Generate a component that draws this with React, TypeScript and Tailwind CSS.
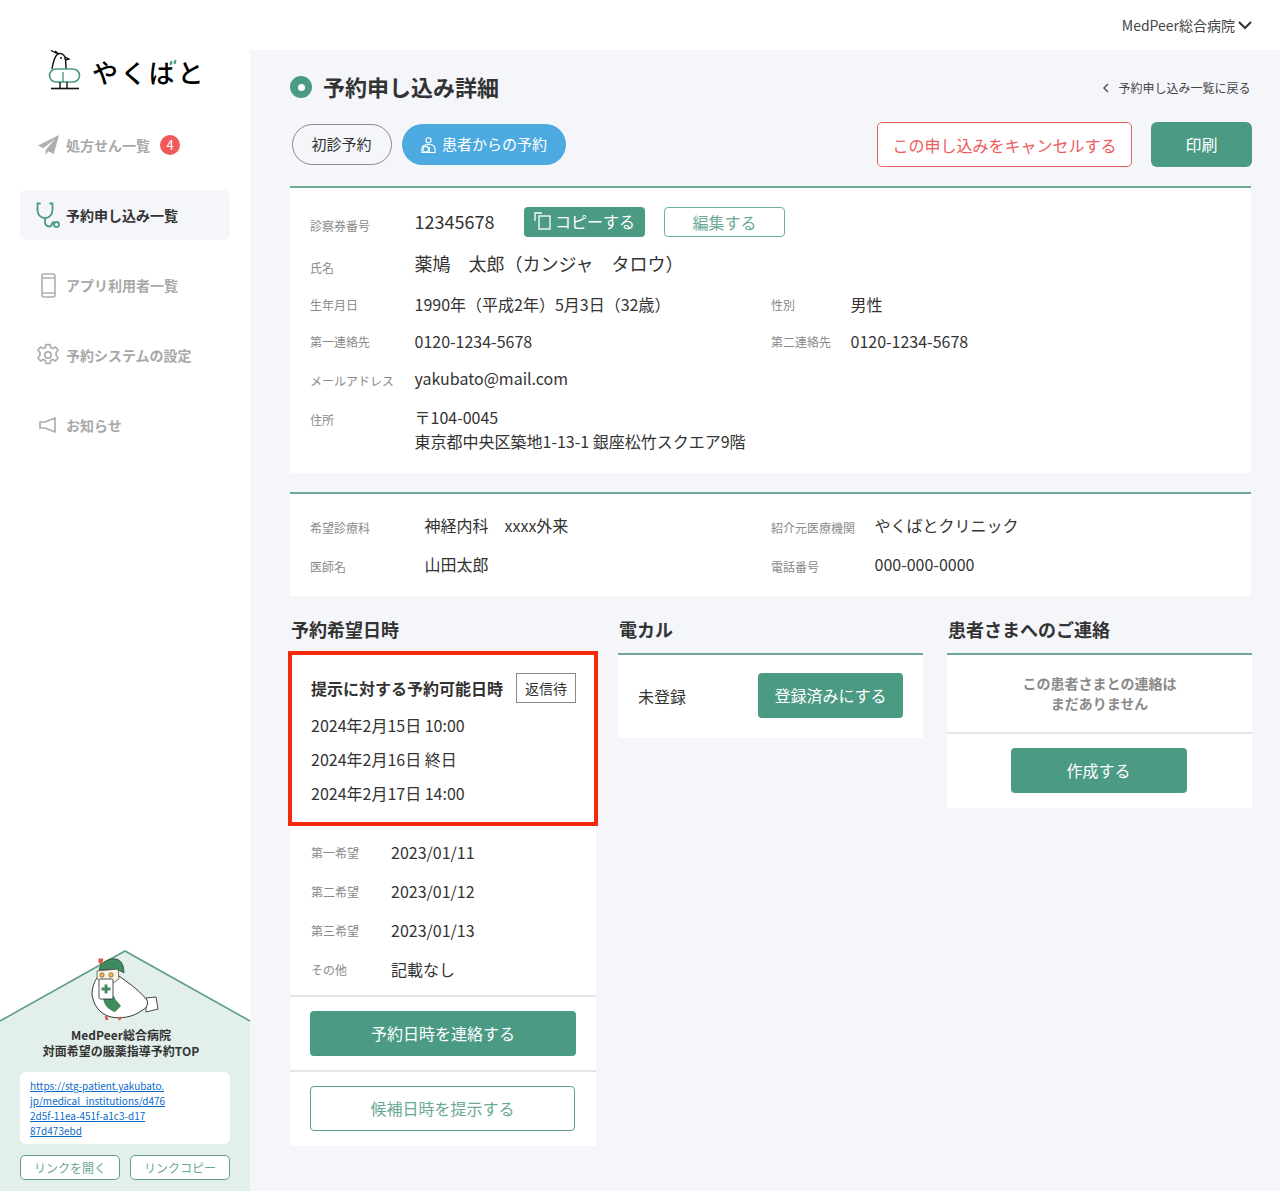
import React from "react";

const font = { fontFamily: '"Noto Sans CJK JP", "Noto Sans", sans-serif' };

function Logo() {
  return (
    <div className="flex items-start gap-[10px] h-[50px] pl-[48px]">
      <svg width="34" height="40" viewBox="0 0 34 40" fill="none">
        <path d="M4 19 C5 13 6 9 8 6 C10 2 16 3 17 8 C18 11 18 15 18 19" stroke="#111" strokeWidth="1.4" />
        <path d="M3 0.500 L10 4 M7 1 L11 4 M17 7 L21 9 L17 10" stroke="#111" strokeWidth="1.300" />
        <circle cx="13" cy="8" r="1" fill="#111" />
        <rect x="1.500" y="19" width="30" height="13" rx="6.500" stroke="#4b9b84" strokeWidth="1.700" fill="#fff" />
        <path d="M15 22 V32" stroke="#4b9b84" strokeWidth="1.400" />
        <path d="M12 32 V38 M19 32 V38" stroke="#111" strokeWidth="1.400" />
        <path d="M3 38.500 H31" stroke="#111" strokeWidth="1.600" />
      </svg>
      <span className="relative text-[26px] leading-[40px] font-medium text-black tracking-[2.500px] mt-[2px]">
        やくばと
        <svg width="10" height="9" viewBox="0 0 10 9" className="absolute left-[76px] top-[6px]">
          <rect width="10" height="9" fill="#fff" />
          <ellipse cx="3" cy="5" rx="1.300" ry="2.400" fill="#4b9b84" transform="rotate(15 3 5)" />
          <ellipse cx="7" cy="4" rx="1.300" ry="2.400" fill="#4b9b84" transform="rotate(15 7 4)" />
        </svg>
      </span>
    </div>
  );
}

function PlaneIcon() {
  return (
    <svg width="21" height="21" viewBox="1 1 20 20" fill="#aeaeae">
      <path d="M21 1 L1 11 L6 13.5 L17 5 L8.5 15 L8 20 L11 16.5 L16 19 Z" />
    </svg>
  );
}
function StethIcon() {
  return (
    <svg width="24" height="26" viewBox="0 0 24 26" fill="none" stroke="#4b9b84" strokeWidth="1.800" strokeLinecap="round">
      <path d="M4 1.500 H1.500 V8 C1.500 13 5 16 9 16 C13 16 16.500 13 16.500 8 V1.500 H14" />
      <path d="M9 16 V20 C9 25 15 26 16 22 C16.500 20 17 20 18 20.500" />
      <circle cx="20.500" cy="22.500" r="2.500" />
    </svg>
  );
}
function PhoneIcon() {
  return (
    <svg width="15" height="25" viewBox="0 0 15 25" fill="none" stroke="#aeaeae" strokeWidth="1.600">
      <rect x="1" y="1" width="13" height="23" rx="2" />
      <path d="M1 5 H14 M1 20 H14" />
    </svg>
  );
}
function GearIcon() {
  return (
    <svg width="24" height="24" viewBox="0 0 24 24" fill="none" stroke="#aeaeae" strokeWidth="1.700" strokeLinejoin="round">
      <path d="M10 1.500h4l.6 3 2.200 1 2.700-1.500 2.600 3.300-2 2.300v2.800l2 2.300-2.600 3.300-2.700-1.500-2.200 1-.6 3h-4l-.6-3-2.200-1-2.700 1.500-2.600-3.300 2-2.300V9.600l-2-2.300 2.600-3.300 2.700 1.500 2.200-1z" />
      <circle cx="12" cy="12" r="3.200" />
    </svg>
  );
}
function HornIcon() {
  return (
    <svg width="18" height="16" viewBox="0 0 18 16" fill="none" stroke="#aeaeae" strokeWidth="1.700" strokeLinejoin="round">
      <path d="M1 5 H6 L16 1 V15 L6 11 H1 Z" />
    </svg>
  );
}

function NavItem({ icon, label, active, badge }: { icon: React.ReactNode; label: string; active?: boolean; badge?: string }) {
  return (
    <div className={`flex items-center h-[50px] w-[210px] mx-[20px] rounded-[6px] pl-[16px] ${active ? "bg-[#f4f6fa] text-[#333]" : "text-[#a8a8a8]"}`}>
      <div className="w-[24px] flex justify-center shrink-0">{icon}</div>
      <span className="text-[14px] font-bold ml-[6px]">{label}</span>
      {badge && (
        <span className="ml-[10px] w-[20px] h-[20px] rounded-full bg-[#ee5a5a] text-white text-[13px] flex items-center justify-center">
          {badge}
        </span>
      )}
    </div>
  );
}

function Mascot() {
  return (
    <svg width="70" height="70" viewBox="0 0 70 70" className="absolute left-[91px] top-[6px]">
      <path d="M55 42 L65 41 L67 53 L55 56 Z" fill="#fff" stroke="#222" strokeWidth="0.800" />
      <path d="M1 38 C1 30 5 22 8 20 L28 20 C36 26 46 32 56 44 C58 50 54 53 50 55 C42 61 30 63 20 61 C8 58 2 48 1 38Z" fill="#fff" stroke="#222" strokeWidth="0.900" />
      <path d="M8 14 C9 6 20 0 28 4 C32 7 33 12 33 17 C28 13 18 13 8 14Z" fill="#3f8a5f" stroke="#222" strokeWidth="0.600" />
      <path d="M8 7 C6 3 9 1 10 3 C11 1 14 3 11 7 L10 9 Z" fill="#e2574c" />
      <path d="M6 15 L27 13 L28 23 L22 27 L10 27 L6 22 Z" fill="#fbf3e4" stroke="#222" strokeWidth="0.600" />
      <circle cx="11" cy="19" r="2.200" fill="#f3c44e" stroke="#222" strokeWidth="0.500" />
      <circle cx="20" cy="19" r="2.200" fill="#f3c44e" stroke="#222" strokeWidth="0.500" />
      <path d="M12 42 C13 50 18 54 24 56 L30 50 C27 46 24 44 23 40Z" fill="#3f8a5f" />
      <rect x="8" y="23" width="14" height="20" rx="1.500" fill="#fff" stroke="#222" strokeWidth="0.800" />
      <path d="M15 28.500 V37.500 M10.500 33 H19.500" stroke="#3f8a5f" strokeWidth="2.800" />
      <path d="M15 60 L16 64 M28 61 L29 64" stroke="#d9615a" strokeWidth="2.800" />
    </svg>
  );
}

function Sidebar() {
  return (
    <aside className="w-[250px] shrink-0 bg-white flex flex-col justify-between pt-[50px]">
      <div>
        <Logo />
        <nav className="flex flex-col gap-[20px] mt-[20px]">
          <NavItem icon={<PlaneIcon />} label="処方せん一覧" badge="4" />
          <NavItem active icon={<StethIcon />} label="予約申し込み一覧" />
          <NavItem icon={<PhoneIcon />} label="アプリ利用者一覧" />
          <NavItem icon={<GearIcon />} label="予約システムの設定" />
          <NavItem icon={<HornIcon />} label="お知らせ" />
        </nav>
      </div>
      <div className="relative h-[241px] pt-[77px]">
        <svg width="250" height="241" viewBox="0 0 250 241" className="absolute left-0 top-0">
          <path d="M0 71 L125 1 L250 71 V241 H0 Z" fill="#e3efeb" />
          <path d="M0 71 L125 1 L250 71" fill="none" stroke="#5f9d88" strokeWidth="1.600" />
        </svg>
        <Mascot />
        <div className="relative">
          <p className="text-center text-[12px] leading-[16px] font-bold text-[#333] pr-[8px]">
            MedPeer総合病院
            <br />
            対面希望の服薬指導予約TOP
          </p>
          <div className="mx-[20px] mt-[13px] h-[72px] bg-white rounded-[6px] px-[10px] py-[6px] text-[10px] leading-[15px] text-[#0b6bcb] underline break-all">
            https://stg-patient.yakubato.
            <br />
            jp/medical_institutions/d476
            <br />
            2d5f-11ea-451f-a1c3-d17
            <br />
            87d473ebd
          </div>
          <div className="flex gap-[10px] mx-[20px] mt-[11px]">
            <button className="w-[100px] h-[25px] bg-white rounded-[5px] border border-[#5f9d88] text-[12px] text-[#6aa995]">リンクを開く</button>
            <button className="w-[100px] h-[25px] bg-white rounded-[5px] border border-[#5f9d88] text-[12px] text-[#6aa995]">リンクコピー</button>
          </div>
        </div>
      </div>
    </aside>
  );
}

function Label({ w, pt, children }: { w: string; pt: string; children: React.ReactNode }) {
  return <div className={`${w} ${pt} text-[12px] leading-[16px] text-[#8a8a8a] shrink-0`}>{children}</div>;
}

function Row({ className, children }: { className?: string; children: React.ReactNode }) {
  return <div className={`flex items-center text-[#333] ${className ?? ""}`}>{children}</div>;
}

function CopyIcon() {
  return (
    <svg width="18" height="18" viewBox="0 0 18 18" fill="none" stroke="#fff" strokeWidth="1.300">
      <path d="M1 9 V1 H8" />
      <rect x="5" y="4" width="11" height="13" />
    </svg>
  );
}

function PatientIcon() {
  return (
    <svg width="15" height="18" viewBox="0 0 16 18" fill="none" stroke="#fff" strokeWidth="1.200">
      <circle cx="8" cy="4" r="2.800" />
      <path d="M1 17 V13 C1 10 4 8.500 8 8.500 C12 8.500 15 10 15 13 V17 Z" />
      <circle cx="5" cy="13.500" r="3" />
      <path d="M9 11 V17" />
    </svg>
  );
}

function SectionTitle({ children }: { children: React.ReactNode }) {
  return <h2 className="text-[18px] leading-[26px] font-bold text-[#333] h-[26px] pl-[1px]">{children}</h2>;
}

function PrefRow({ label, value }: { label: string; value: string }) {
  return (
    <div className="flex items-center h-[39px] pl-[21px] text-[#333]">
      <div className="w-[80px] text-[12px] text-[#8a8a8a] pt-[2px]">{label}</div>
      <div className="text-[16px]">{value}</div>
    </div>
  );
}

export default function App() {
  return (
    <div style={font} className="w-[1280px] h-[1191px] bg-white flex flex-col overflow-hidden">
      <header className="h-[50px] shrink-0 flex items-center justify-end pr-[28px] gap-[3px] text-[14px] text-[#444] bg-white">
        <span>MedPeer総合病院</span>
        <svg width="14" height="10" viewBox="0 0 14 10" fill="none" stroke="#333" strokeWidth="2"><path d="M1 2 L7 8 L13 2" /></svg>
      </header>
      <div className="flex flex-1 min-h-0">
        <div className="-mt-[50px] flex">
          <Sidebar />
        </div>
        <main className="flex-1 bg-[#f4f6fa] pl-[40px] pr-[29px] pt-[19px]">
          <div className="flex items-center justify-between h-[36px]">
            <div className="flex items-center">
              <span className="w-[22px] h-[22px] rounded-full bg-[#4b9b84] flex items-center justify-center">
                <span className="w-[7px] h-[7px] rounded-full bg-white" />
              </span>
              <h1 className="ml-[11px] text-[22px] font-bold text-[#333] pb-[2px]">予約申し込み詳細</h1>
            </div>
            <div className="flex items-center text-[12px] text-[#444] pt-[2px] pr-[0.500px]">
              <svg width="8" height="10" viewBox="0 0 8 10" fill="none" stroke="#555" strokeWidth="1.500" className="mr-[8px]"><path d="M6 1 L2 5 L6 9" /></svg>
              予約申し込み一覧に戻る
            </div>
          </div>

          <div className="flex items-center justify-between mt-[17px] h-[45px]">
            <div className="flex items-center gap-[10px] pl-[2px]">
              <span className="w-[100px] h-[41px] pr-[1px] rounded-full border border-[#8a8a8a] flex items-center justify-center text-[15px] text-[#333]">初診予約</span>
              <span className="w-[164px] h-[41px] rounded-full bg-[#4daae0] flex items-center justify-center gap-[6px] text-[15px] text-white">
                <PatientIcon />
                患者からの予約
              </span>
            </div>
            <div className="flex items-center gap-[19px] -mr-[1px]">
              <button className="w-[255px] h-[45px] bg-white rounded-[5px] border border-[#e8605a] text-[16px] text-[#ee5a5a]">この申し込みをキャンセルする</button>
              <button className="w-[101px] h-[45px] pb-[2px] rounded-[6px] bg-[#4b9b84] text-[16px] text-white">印刷</button>
            </div>
          </div>

          <section className="mt-[19px] h-[287px] bg-white border-t-2 border-[#6fa896] pl-[20px] pt-[19px]">
            <Row className="h-[30px]">
              <Label w="w-[104.500px]" pt="pt-[8px]">診察券番号</Label>
              <span className="text-[18px] pb-[2px]">12345678</span>
              <span className="ml-[29.500px] w-[121px] h-[30px] pb-[2px] rounded-[4px] bg-[#4b9b84] text-white text-[16px] flex items-center justify-center gap-[3px]">
                <CopyIcon />
                コピーする
              </span>
              <span className="ml-[19px] w-[121px] h-[30px] rounded-[4px] border border-[#6fb09b] text-[#6aa995] text-[16px] flex items-center justify-center">編集する</span>
            </Row>
            <Row className="h-[30px] mt-[11px]">
              <Label w="w-[104.500px]" pt="pt-[10px]">氏名</Label>
              <span className="text-[18px]">薬鳩　太郎（カンジャ　タロウ）</span>
            </Row>
            <Row className="h-[24px] mt-[14px]">
              <Label w="w-[104.500px]" pt="pt-[1px]">生年月日</Label>
              <span className="text-[16px] w-[356.500px]">1990年（平成2年）5月3日（32歳）</span>
              <Label w="w-[79.500px]" pt="pt-[1px]">性別</Label>
              <span className="text-[16px]">男性</span>
            </Row>
            <Row className="h-[24px] mt-[13px]">
              <Label w="w-[104.500px]" pt="pt-[1px]">第一連絡先</Label>
              <span className="text-[16px] w-[356.500px]">0120-1234-5678</span>
              <Label w="w-[79.500px]" pt="pt-[1px]">第二連絡先</Label>
              <span className="text-[16px]">0120-1234-5678</span>
            </Row>
            <Row className="h-[24px] mt-[13px]">
              <Label w="w-[104.500px]" pt="pt-[5px]">メールアドレス</Label>
              <span className="text-[16px]">yakubato@mail.com</span>
            </Row>
            <div className="flex text-[#333] mt-[15px]">
              <Label w="w-[104.500px]" pt="pt-[7px]">住所</Label>
              <div className="text-[16px] leading-[24px]">
                〒104-0045
                <br />
                東京都中央区築地1-13-1 銀座松竹スクエア9階
              </div>
            </div>
          </section>

          <section className="mt-[19px] h-[104px] bg-white border-t-2 border-[#6fa896] pl-[20px] pt-[19px]">
            <Row className="h-[24px]">
              <Label w="w-[114.500px]" pt="pt-[5px]">希望診療科</Label>
              <span className="text-[16px] w-[346.500px]">神経内科　xxxx外来</span>
              <Label w="w-[103.500px]" pt="pt-[5px]">紹介元医療機関</Label>
              <span className="text-[16px]">やくばとクリニック</span>
            </Row>
            <Row className="h-[24px] mt-[15px]">
              <Label w="w-[114.500px]" pt="pt-[5px]">医師名</Label>
              <span className="text-[16px] w-[346.500px]">山田太郎</span>
              <Label w="w-[103.500px]" pt="pt-[5px]">電話番号</Label>
              <span className="text-[16px]">000-000-0000</span>
            </Row>
          </section>

          <div className="flex mt-[20px] -mr-[1px] items-start">
            <div className="w-[306px]">
              <SectionTitle>予約希望日時</SectionTitle>
              <div className="bg-white mt-[9px]">
                <div className="-mx-[2px] h-[175px] border-[4px] border-[#f52a0a] bg-white pl-[19px] pt-[18px] text-[#333]">
                  <div className="flex items-center h-[30px]">
                    <span className="text-[16px] font-bold">提示に対する予約可能日時</span>
                    <span className="ml-[13px] w-[60px] h-[30px] border border-[#8a8a8a] text-[14px] flex items-center justify-center">返信待</span>
                  </div>
                  <div className="mt-[5px] text-[16px] leading-[34px]">
                    <div>2024年2月15日 10:00</div>
                    <div>2024年2月16日 終日</div>
                    <div>2024年2月17日 14:00</div>
                  </div>
                </div>
                <div className="pt-[6px] pb-[7px]">
                  <PrefRow label="第一希望" value="2023/01/11" />
                  <PrefRow label="第二希望" value="2023/01/12" />
                  <PrefRow label="第三希望" value="2023/01/13" />
                  <PrefRow label="その他" value="記載なし" />
                </div>
                <div className="border-t-2 border-[#e5e5e5] px-[20px] pt-[14px] pb-[14px]">
                  <button className="w-[266px] h-[45px] pb-[2px] bg-[#4b9b84] rounded-[4px] text-white text-[16px]">予約日時を連絡する</button>
                </div>
                <div className="border-t-2 border-[#e5e5e5] px-[20px] pt-[14px] pb-[15px]">
                  <button className="w-[265px] h-[45px] pb-[2px] bg-white border border-[#5f9d88] rounded-[4px] text-[#6aa995] text-[16px]">候補日時を提示する</button>
                </div>
              </div>
            </div>

            <div className="w-[305px] ml-[22px]">
              <SectionTitle>電カル</SectionTitle>
              <div className="mt-[11px] bg-white border-t-2 border-[#6fa896] h-[85px] pb-[2px] flex items-center pl-[20px] text-[#333]">
                <span className="text-[16px] w-[120px]">未登録</span>
                <button className="w-[145px] h-[45px] pb-[2px] bg-[#4b9b84] rounded-[4px] text-white text-[16px]">登録済みにする</button>
              </div>
            </div>

            <div className="w-[305px] ml-[24px]">
              <SectionTitle>患者さまへのご連絡</SectionTitle>
              <div className="mt-[11px] bg-white border-t-2 border-[#6fa896]">
                <div className="h-[77px] pb-[2px] flex items-center justify-center text-center text-[14px] leading-[20px] font-bold text-[#8a8a8a]">
                  この患者さまとの連絡は
                  <br />
                  まだありません
                </div>
                <div className="border-t-2 border-[#e5e5e5] pt-[14px] pb-[15px] pr-[2px] flex justify-center">
                  <button className="w-[176px] h-[45px] pb-[2px] bg-[#4b9b84] rounded-[4px] text-white text-[16px]">作成する</button>
                </div>
              </div>
            </div>
          </div>
        </main>
      </div>
    </div>
  );
}
